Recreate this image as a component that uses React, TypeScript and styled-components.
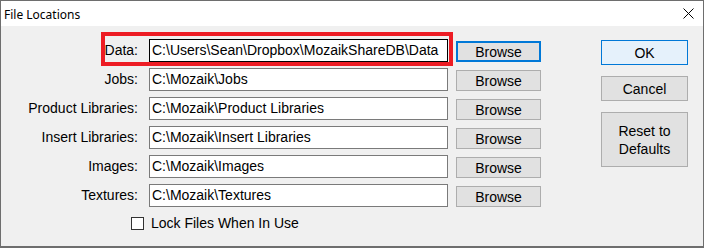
import React from 'react';
import styled, { createGlobalStyle } from 'styled-components';

const GlobalStyle = createGlobalStyle`
  html, body {
    margin: 0;
    padding: 0;
    background: #ffffff;
  }
  * {
    box-sizing: border-box;
  }
`;

const Window = styled.div`
  width: 704px;
  height: 248px;
  border: 1px solid #6e6e6e;
  border-bottom-width: 2px;
  background: #f0f0f0;
  display: flex;
  flex-direction: column;
  font-family: 'Liberation Sans', Arial, sans-serif;
  font-size: 14px;
  color: #000;
  overflow: hidden;
`;

const TitleBar = styled.div`
  height: 25px;
  background: #ffffff;
  display: flex;
  align-items: center;
  justify-content: space-between;
  padding: 0 9px 0 3px;
`;

const Title = styled.span`
  font-family: 'Noto Sans', 'Open Sans', sans-serif;
  font-size: 12px;
  padding-top: 1px;
`;

const Body = styled.div`
  flex: 1;
  display: flex;
  padding-top: 13px;
`;

const Form = styled.div`
  display: flex;
  flex-direction: column;
  gap: 6px;
`;

const Row = styled.div`
  position: relative;
  display: flex;
  align-items: flex-start;
`;

const Label = styled.label`
  width: 137px;
  height: 23px;
  line-height: 23px;
  text-align: right;
  margin-right: 11px;
`;

const PathInput = styled.div<{ $active?: boolean }>`
  width: 299px;
  height: 23px;
  line-height: 21px;
  padding: 0 2px;
  background: #fff;
  border: 1px solid ${p => (p.$active ? '#000000' : '#7a7a7a')};
  white-space: nowrap;
  overflow: hidden;
`;

const Button = styled.button<{ $focused?: boolean; $default?: boolean }>`
  font-family: 'Liberation Sans', Arial, sans-serif;
  font-size: 14px;
  color: #000;
  padding: 0;
  background: ${p => (p.$default ? '#e5f1fb' : '#e1e1e1')};
  border: ${p => (p.$focused ? '2px' : '1px')} solid
    ${p => (p.$focused || p.$default ? '#0078d7' : '#adadad')};
`;

const BrowseButton = styled(Button)`
  width: 85px;
  height: 21px;
  margin-left: 8px;
  margin-top: 2px;
`;

const Highlight = styled.div`
  position: absolute;
  left: 100px;
  top: -7px;
  width: 352px;
  height: 34px;
  border: 4px solid #ed1c24;
  pointer-events: none;
`;

const CheckRow = styled.label`
  display: flex;
  align-items: center;
  margin: 3px 0 0 130px;
  height: 14px;
`;

const Box = styled.span`
  width: 13px;
  height: 13px;
  border: 1px solid #333;
  background: #fff;
  margin-right: 7px;
`;

const Side = styled.div`
  display: flex;
  flex-direction: column;
  gap: 11px;
  margin-left: 60px;
  padding-top: 1px;
`;

const SideButton = styled(Button)<{ $tall?: boolean }>`
  width: 87px;
  height: ${p => (p.$tall ? '55px' : '25px')};
  line-height: 18px;
`;

const rows = [
  { label: 'Data:', path: 'C:\\Users\\Sean\\Dropbox\\MozaikShareDB\\Data' },
  { label: 'Jobs:', path: 'C:\\Mozaik\\Jobs' },
  { label: 'Product Libraries:', path: 'C:\\Mozaik\\Product Libraries' },
  { label: 'Insert Libraries:', path: 'C:\\Mozaik\\Insert Libraries' },
  { label: 'Images:', path: 'C:\\Mozaik\\Images' },
  { label: 'Textures:', path: 'C:\\Mozaik\\Textures' },
];

const CloseIcon = () => (
  <svg width="11" height="11" viewBox="0 0 11 11">
    <path d="M0.5 0.5 L10.5 10.5 M10.5 0.5 L0.5 10.5" stroke="#000" strokeWidth="1" />
  </svg>
);

export default function App() {
  return (
    <>
      <GlobalStyle />
      <Window>
        <TitleBar>
          <Title>File Locations</Title>
          <CloseIcon />
        </TitleBar>
        <Body>
          <Form>
            {rows.map((r, i) => (
              <Row key={r.label}>
                <Label>{r.label}</Label>
                <PathInput $active={i === 0}>{r.path}</PathInput>
                <BrowseButton $focused={i === 0}>Browse</BrowseButton>
                {i === 0 && <Highlight />}
              </Row>
            ))}
            <CheckRow>
              <Box />
              Lock Files When In Use
            </CheckRow>
          </Form>
          <Side>
            <SideButton $default>OK</SideButton>
            <SideButton>Cancel</SideButton>
            <SideButton $tall>
              Reset to
              <br />
              Defaults
            </SideButton>
          </Side>
        </Body>
      </Window>
    </>
  );
}
